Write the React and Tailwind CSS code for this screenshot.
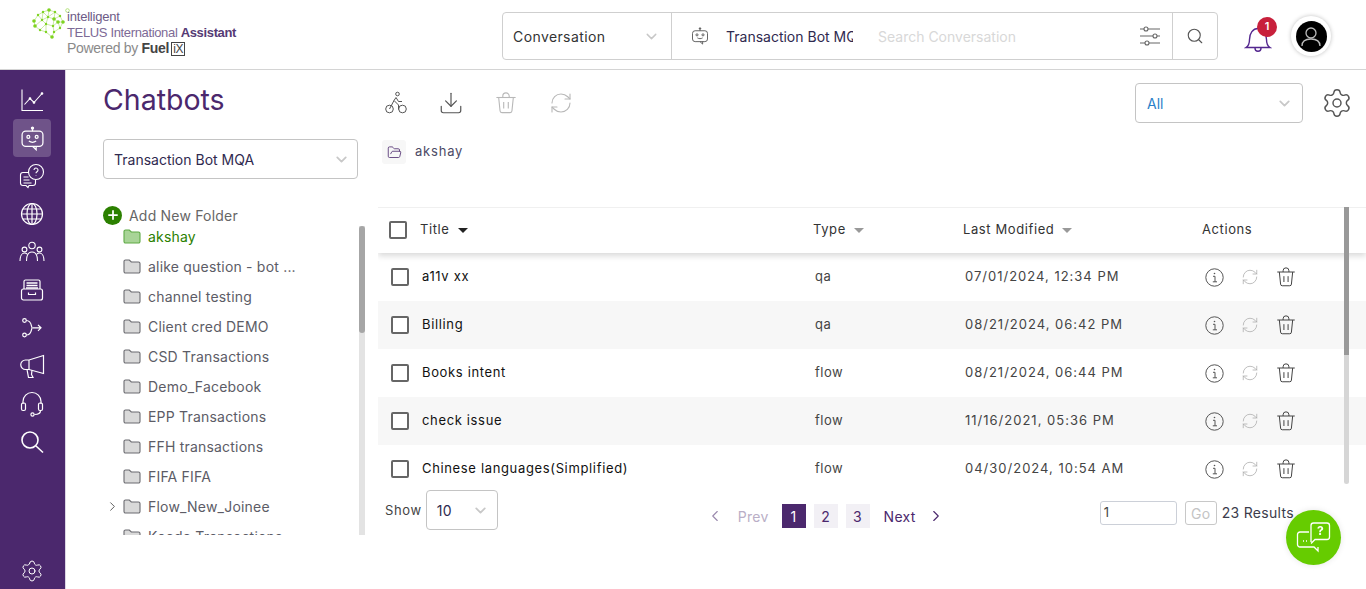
import React from 'react';
import { ChevronDown, ChevronLeft, ChevronRight, Search, Settings, Download, RefreshCw, Plus, FolderOpen } from 'lucide-react';

const FONT = "font-['Inter','Liberation_Sans',sans-serif]";

const BotIcon = ({ size = 24, className = '' }) => (
  <svg width={size} height={size} viewBox="0 0 24 24" fill="none" stroke="currentColor" strokeWidth="1.200" className={className}>
    <circle cx="12" cy="2" r="1" fill="currentColor" />
    <path d="M12 3V5" />
    <rect x="2" y="5" width="20" height="14.500" rx="3.500" />
    <circle cx="8" cy="10.500" r="1.400" />
    <circle cx="16" cy="10.500" r="1.400" />
    <path d="M8.500 14.500c2 1.400 5 1.400 7 0" />
    <path d="M12 19.500l3.500 3.300v-3.300" />
  </svg>
);

const ChartIcon = () => (
  <svg width="24" height="24" viewBox="0 0 24 24" fill="none" stroke="currentColor" strokeWidth="1.100">
    <path d="M2 1.500V22.500H23" />
    <path d="M4.500 16.500L10 10.500L14 14.500L22 5.500" />
    <circle cx="10" cy="10.500" r="0.800" fill="currentColor" />
    <circle cx="14" cy="14.500" r="0.800" fill="currentColor" />
    <circle cx="22" cy="5.500" r="0.800" fill="currentColor" />
  </svg>
);

const QuestionChatIcon = () => (
  <svg width="26" height="26" viewBox="0 0 26 26" fill="none" stroke="currentColor" strokeWidth="1.100">
    <circle cx="17" cy="9" r="7.500" />
    <path d="M17 12.500v.4M15 7a2 2 0 1 1 3 1.800c-.7.4-1 .8-1 1.500" />
    <path d="M10 9.500H4a2.500 2.500 0 0 0-2.500 2.500v8A2.500 2.500 0 0 0 4 22.500h3l2 2 1-2h4a2.500 2.500 0 0 0 2.500-2.500v-3" />
    <path d="M4.500 14h5M4.500 17h6M4.500 20h8" />
  </svg>
);

const GlobeIcon = () => (
  <svg width="24" height="24" viewBox="0 0 24 24" fill="none" stroke="currentColor" strokeWidth="1.200">
    <circle cx="12" cy="12" r="10.500" />
    <ellipse cx="12" cy="12" rx="5" ry="10.500" />
    <path d="M12 1.500V22.500M1.500 12H22.500M3 7H21M3 17H21" />
  </svg>
);

const TeamIcon = () => (
  <svg width="26" height="22" viewBox="0 0 26 22" fill="none" stroke="currentColor" strokeWidth="1.100">
    <circle cx="13" cy="4.500" r="3.200" />
    <circle cx="5.500" cy="8.500" r="2.400" />
    <circle cx="20.500" cy="8.500" r="2.400" />
    <path d="M7.500 20c0-6 2-9 5.500-9s5.500 3 5.500 9" />
    <path d="M1 20c0-4 1.500-8 4.500-8 1 0 1.800.3 2.500 1M25 20c0-4-1.500-8-4.500-8-1 0-1.800.3-2.500 1" />
  </svg>
);

const ArchiveIcon = () => (
  <svg width="24" height="24" viewBox="0 0 24 24" fill="none" stroke="currentColor" strokeWidth="1.200">
    <path d="M4 11V3.500A1.500 1.500 0 0 1 5.500 2h13A1.500 1.500 0 0 1 20 3.500V11" />
    <path d="M6.500 5h11M6.500 7.500h11M6 10h12" strokeWidth="1.500" />
    <rect x="1.500" y="11" width="21" height="11" rx="2" />
    <path d="M8.500 14.500v2h7v-2" />
  </svg>
);

const FlowIcon = () => (
  <svg width="22" height="22" viewBox="0 0 22 22" fill="none" stroke="currentColor" strokeWidth="1.200">
    <circle cx="3.500" cy="3.500" r="1.800" />
    <circle cx="3.500" cy="18" r="1.800" />
    <path d="M5.300 3.500c6 0 4.700 7.300 6 7.300 -1.300 0 0 7.200-6 7.200" />
    <path d="M11.300 10.800H20M17 7.800l3 3-3 3" />
  </svg>
);

const MegaphoneIcon = () => (
  <svg width="25" height="25" viewBox="0 0 25 25" fill="none" stroke="currentColor" strokeWidth="1.200">
    <path d="M23.500 1.500V19.500L9 15.500H5.500a4.500 4.500 0 0 1 0-9.500H9z" />
    <path d="M9 6V15.500" />
    <path d="M7 15.500L8.500 23.500H13L11.500 20.500L12 16.300" />
  </svg>
);

const HeadsetIcon = () => (
  <svg width="24" height="26" viewBox="0 0 24 26" fill="none" stroke="currentColor" strokeWidth="1.200">
    <path d="M3 13V10.500a9 9 0 0 1 18 0V13" />
    <rect x="1.500" y="12" width="4" height="7.500" rx="1.500" />
    <rect x="18.500" y="12" width="4" height="7.500" rx="1.500" />
    <path d="M20.500 19.500c0 3-2.500 4-6 4" />
    <circle cx="12.500" cy="23.500" r="1.600" />
  </svg>
);

const SearchNavIcon = () => (
  <svg width="24" height="24" viewBox="0 0 24 24" fill="none" stroke="currentColor" strokeWidth="1.600">
    <circle cx="10" cy="10" r="8" />
    <path d="M16 16L23 22.500" />
  </svg>
);

const BikeIcon = () => (
  <svg width="24" height="24" viewBox="0 0 24 24" fill="none" stroke="currentColor" strokeWidth="1">
    <circle cx="5.500" cy="18" r="3.800" />
    <circle cx="18.500" cy="18" r="3.800" />
    <circle cx="13.500" cy="3" r="1.800" />
    <path d="M5.500 18L10 9.500L12 6.500L14.500 10.500H18M10 9.500L14.500 14V18.500" />
  </svg>
);

const TrashIcon = ({ size = 24, className = '' }) => (
  <svg width={size} height={size} viewBox="0 0 24 24" fill="none" stroke="currentColor" strokeWidth="1.200" className={className}>
    <path d="M1.500 6H22.500" />
    <path d="M8.500 6V4.500a3.500 3.500 0 0 1 7 0V6" />
    <path d="M4 6L5.500 20.500A2 2 0 0 0 7.500 22.500H16.500A2 2 0 0 0 18.500 20.500L20 6" />
    <path d="M9.500 11V18M14.500 11V18" />
  </svg>
);

const InfoIcon = () => (
  <svg width="19" height="19" viewBox="0 0 19 19" fill="none" stroke="#555" strokeWidth="1">
    <circle cx="9.500" cy="9.500" r="8.700" />
    <circle cx="9.500" cy="5.500" r="0.800" fill="#555" stroke="none" />
    <path d="M8 8.300H10V13.800M7.800 13.800H12" />
  </svg>
);

const SlidersIcon = () => (
  <svg width="22" height="20" viewBox="0 0 22 20" fill="none" stroke="#666" strokeWidth="1.100">
    <path d="M1 3H5M9 3H21M1 10H14M18 10H21M1 17H6M10 17H21" />
    <circle cx="7" cy="3" r="2" />
    <circle cx="16" cy="10" r="2" />
    <circle cx="8" cy="17" r="2" />
  </svg>
);

const BellIcon = () => (
  <svg width="28" height="28" viewBox="0 0 28 28" fill="none" stroke="#54278f" strokeWidth="1.400">
    <path d="M2 22.500c2.500-1.500 3.500-4 3.500-8C5.500 8 9 3.500 14 3.500s8.500 4.500 8.500 11c0 4 1 6.500 3.500 8z" />
    <path d="M11 23c0 2 1.300 3.200 3 3.200S17 25 17 23" />
  </svg>
);

const Folder = ({ active }) => (
  <svg width="18" height="15" viewBox="0 0 18 15" className="shrink-0">
    <path
      d="M1 2.500A1.500 1.500 0 0 1 2.500 1h3.800l2 2h7.200A1.500 1.500 0 0 1 17 4.500v8a1.500 1.500 0 0 1-1.500 1.500h-13A1.500 1.500 0 0 1 1 12.500z"
      fill={active ? '#a8d497' : '#d9d9d9'}
      stroke={active ? '#5eaa45' : '#6b6b70'}
      strokeWidth="1.100"
    />
  </svg>
);

const brainNodes = [[2, 13], [6, 7], [11, 4], [17, 2], [23, 4], [28, 8], [31, 14], [28, 20], [22, 24], [20, 29], [14, 24], [8, 22], [3, 18], [10, 12], [16, 9], [22, 11], [14, 16], [21, 18], [26, 14]];

const BrainLogo = () => (
  <svg width="38" height="31" viewBox="0 0 38 31" fill="none" stroke="#a8de6a" strokeWidth="0.600" className="shrink-0">
    <path d="M2 13L6 7L11 4L17 2L23 4L28 8L31 14L28 20L22 24L20 29L14 24L8 22L3 18L2 13M6 7L10 12L11 4L16 9L17 2M16 9L23 4L22 11L28 8M22 11L26 14L31 14M26 14L28 20M26 14L21 18L22 24M21 18L14 16L14 24M14 16L8 22M14 16L10 12L3 18M10 12L16 9L22 11L21 18M16 9L14 16" />
    {brainNodes.map(([cx, cy], i) => (
      <circle key={i} cx={cx} cy={cy} r={i % 3 === 0 ? 1.800 : 1.200} fill="#7ed321" stroke="none" />
    ))}
    <circle cx="35.500" cy="2.500" r="1.800" stroke="#9ad94f" strokeWidth="0.700" />
  </svg>
);

const Select = ({ label, className, textClass = 'text-[#2f2a4f]' }) => (
  <div className={`flex items-center justify-between border border-[#c4c4c4] rounded-[4px] bg-white ${className}`}>
    <span className={`text-[14px] ${textClass}`}>{label}</span>
    <ChevronDown size={17} strokeWidth={2.500} className="text-[#c8c8c8]" />
  </div>
);

const folders = ['alike question - bot ...', 'channel testing', 'Client cred DEMO', 'CSD Transactions', 'Demo_Facebook', 'EPP Transactions', 'FFH transactions', 'FIFA FIFA', 'Flow_New_Joinee', 'Kaede Transactions'];

const rows = [
  ['a11v xx', 'qa', '07/01/2024, 12:34 PM'],
  ['Billing', 'qa', '08/21/2024, 06:42 PM'],
  ['Books intent', 'flow', '08/21/2024, 06:44 PM'],
  ['check issue', 'flow', '11/16/2021, 05:36 PM'],
  ['Chinese languages(Simplified)', 'flow', '04/30/2024, 10:54 AM'],
];

const Header = () => (
  <header className="h-[70px] shrink-0 flex items-center border-b border-[#d4d4d4] bg-white">
    <div className="w-[502px] shrink-0 pl-[32px] flex items-start h-full pt-[8px]">
      <BrainLogo />
      <div className="-ml-[3px] pt-[1px] font-['Liberation_Sans',sans-serif]">
        <div className="text-[13px] leading-[16px] tracking-[-0.2px] text-[#6d5a86]">intelligent</div>
        <div className="text-[13px] leading-[15px] tracking-[-0.35px] text-[#7d6a96]">TELUS International <b className="text-[#553a75]">Assistant</b></div>
        <div className="text-[14px] leading-[17px] tracking-[-0.3px] text-[#8a8a8a] flex items-center">
          Powered by&nbsp;<span className="text-[#444] font-bold">Fuel</span>
          <span className="ml-[2px] text-[#444] border border-[#444] leading-[12px] text-[12px] px-[1px]">iX</span>
        </div>
      </div>
    </div>
    <div className="w-[716px] h-[48px] mt-[3px] flex border border-[#cfcfcf] rounded-[4px]">
      <div className="w-[169px] shrink-0 flex items-center justify-between pl-[10px] pr-[11px] border-r border-[#cfcfcf]">
        <span className="text-[14px] tracking-[0.4px] text-[#333]">Conversation</span>
        <ChevronDown size={17} strokeWidth={2} className="text-[#c8c8c8]" />
      </div>
      <div className="flex-1 flex items-center pl-[19px]">
        <BotIcon size={18} className="text-[#555] shrink-0" />
        <span className="ml-[17px] w-[127px] overflow-hidden whitespace-nowrap text-[14px] text-[#2f2a4f]">Transaction Bot MQA</span>
        <span className="ml-[25px] text-[14px] text-[#d8d8d8]">Search Conversation</span>
      </div>
      <div className="w-[45px] pl-[12px] flex items-center">
        <SlidersIcon />
      </div>
      <div className="w-[45px] flex items-center justify-center border-l border-[#cfcfcf]">
        <Search size={18} strokeWidth={1.500} className="text-[#555]" />
      </div>
    </div>
    <div className="relative ml-[26px] mt-[8px]">
      <BellIcon />
      <span className="absolute -top-[8px] left-[13px] w-[20px] h-[20px] rounded-full bg-[#c8203c] text-white text-[11px] font-semibold flex items-center justify-center">1</span>
    </div>
    <div className="ml-[19px] mt-[3px] w-[40px] h-[40px] rounded-full bg-white shadow-[0_0_4px_rgba(0,0,0,0.25)] flex items-center justify-center">
      <div className="w-[31px] h-[31px] rounded-full bg-black flex items-center justify-center">
        <svg width="24" height="24" viewBox="0 0 24 24" fill="none" stroke="#bbb" strokeWidth="1.300">
          <circle cx="12" cy="9" r="5" />
          <path d="M3 22c0-5 4-7 9-7s9 2 9 7" />
        </svg>
      </div>
    </div>
  </header>
);

const NavItem = ({ children }) => <div className="h-[38px] flex items-center justify-center">{children}</div>;

const Sidebar = () => (
  <aside className="w-[66px] shrink-0 bg-[#4b286d] border-r border-[#dcd6e4] flex flex-col items-center text-white pt-[11px] pb-[6px] pr-[1px]">
    <NavItem><ChartIcon /></NavItem>
    <div className="w-[38px] h-[38px] rounded-[4px] bg-[#6f5389] flex items-center justify-center"><BotIcon size={25} /></div>
    <NavItem><QuestionChatIcon /></NavItem>
    <NavItem><GlobeIcon /></NavItem>
    <NavItem><TeamIcon /></NavItem>
    <NavItem><ArchiveIcon /></NavItem>
    <NavItem><FlowIcon /></NavItem>
    <NavItem><MegaphoneIcon /></NavItem>
    <NavItem><HeadsetIcon /></NavItem>
    <NavItem><SearchNavIcon /></NavItem>
    <div className="mt-auto"><Settings size={24} strokeWidth={1} /></div>
  </aside>
);

const FolderPanel = () => (
  <div className="w-[275px] shrink-0 flex flex-col">
    <h1 className="mt-[12px] text-[28.500px] leading-[36px] text-[#4b286d]">Chatbots</h1>
    <Select label="Transaction Bot MQA" className="mt-[21px] w-[255px] h-[40px] pl-[10px] pr-[7px]" />
    <div className="mt-[26px] flex items-center gap-[7px] h-[20px]">
      <span className="w-[19px] h-[19px] rounded-full bg-[#2b8000] flex items-center justify-center"><Plus size={14} strokeWidth={3} className="text-white" /></span>
      <span className="text-[14px] tracking-[0.2px] text-[#666]">Add New Folder</span>
    </div>
    <div className="relative mt-[1px] h-[309px] overflow-hidden">
      <div className="h-[20px] flex items-center pl-[20px] gap-[7px]">
        <Folder active />
        <span className="text-[14px] tracking-[0.2px] text-[#2b8000]">akshay</span>
      </div>
      <div className="pt-[5px]">
        {folders.map((name, i) => (
          <div key={name} className="relative h-[30px] flex items-center pl-[20px] gap-[7px]">
            {i === 8 && <ChevronRight size={15} strokeWidth={1.500} className="absolute left-[2px] text-[#555]" />}
            <Folder />
            <span className="text-[14px] tracking-[0.2px] text-[#5c5c66] whitespace-nowrap">{name}</span>
          </div>
        ))}
      </div>
      <div className="absolute left-[256px] top-0 bottom-0 w-[6px] bg-[#e3e3e3]">
        <div className="h-[107px] bg-[#a6a6a6] rounded-[3px]"></div>
      </div>
    </div>
  </div>
);

const Toolbar = () => (
  <div className="h-[66px] shrink-0 flex items-center pl-[6px] pr-[13px] text-[#555]">
    <BikeIcon />
    <Download size={26} strokeWidth={1.100} className="ml-[30px]" />
    <TrashIcon size={22} className="ml-[31px] text-[#b8b8b8]" />
    <RefreshCw size={24} strokeWidth={1.100} className="ml-[32px] text-[#b8b8b8]" />
    <Select label="All" className="ml-auto w-[168px] h-[40px] pl-[11px] pr-[9px]" textClass="text-[#2a7fc9]" />
    <Settings size={32} strokeWidth={1.100} className="ml-[18px]" />
  </div>
);

const Checkbox = () => <span className="block w-[18px] h-[18px] shrink-0 border-2 border-[#666] rounded-[2px] bg-white"></span>;

const SortCaret = ({ dark }) => (
  <span className={`ml-[8px] w-0 h-0 border-x-[5px] border-x-transparent border-t-[5px] ${dark ? 'border-t-[#222]' : 'border-t-[#999]'}`}></span>
);

const Table = () => (
  <div className="relative h-[278px] mt-[71px] overflow-hidden">
    <div className="relative z-10 h-[46px] pb-[1px] flex items-center border-t border-[#f0f0f0] bg-white shadow-[0_3px_6px_rgba(0,0,0,0.15)] text-[13px] tracking-[0.6px] text-[#333]">
      <div className="w-[435px] flex items-center pl-[11px]">
        <Checkbox />
        <span className="ml-[13px]">Title</span>
        <SortCaret dark />
      </div>
      <div className="w-[150px] flex items-center">Type<SortCaret /></div>
      <div className="w-[239px] flex items-center">Last Modified<SortCaret /></div>
      <div>Actions</div>
    </div>
    {rows.map((row, i) => (
      <div key={row[0]} className={`h-[48px] flex items-center ${i % 2 ? 'bg-[#f7f7f7]' : 'bg-white'}`}>
        <div className="w-[437px] flex items-center pl-[13px]">
          <Checkbox />
          <span className="ml-[13px] text-[13px] tracking-[0.65px] text-[#111]">{row[0]}</span>
        </div>
        <div className="w-[150px] text-[13px] tracking-[0.5px] text-[#444]">{row[1]}</div>
        <div className="w-[240px] text-[13px] tracking-[1px] text-[#444]">{row[2]}</div>
        <InfoIcon />
        <RefreshCw size={18} strokeWidth={1} className="ml-[17px] text-[#aaa]" />
        <TrashIcon size={20} className="ml-[17px] text-[#444]" />
      </div>
    ))}
    <div className="absolute z-20 right-[17px] top-0 bottom-[1px] w-[5px] bg-[#d6d6d6] rounded-b-[3px]">
      <div className="h-[148px] bg-[#999]"></div>
    </div>
  </div>
);

const PageBtn = ({ children, active }) => (
  <span className={`w-[24px] h-[24px] flex items-center justify-center text-[14px] ${active ? 'bg-[#4b286d] text-white' : 'bg-[#f2f0f5] text-[#4b286d]'}`}>{children}</span>
);

const Footer = () => (
  <div className="relative h-[60px] flex items-start pt-[5px] pl-[7px] text-[14px] tracking-[0.3px] text-[#444]">
    <span className="mt-[11px] text-[13px] tracking-[0.6px]">Show</span>
    <Select label="10" className="ml-[4px] w-[72px] h-[40px] pl-[10px] pr-[8px]" />
    <div className="ml-[208px] mt-[14px] flex items-center">
      <ChevronLeft size={18} strokeWidth={1.500} className="text-[#9a89ad]" />
      <span className="ml-[14px] text-[#b9aec6]">Prev</span>
      <span className="ml-[13px] flex gap-[8px]"><PageBtn active>1</PageBtn><PageBtn>2</PageBtn><PageBtn>3</PageBtn></span>
      <span className="ml-[14px] text-[#4b286d]">Next</span>
      <ChevronRight size={18} strokeWidth={1.500} className="ml-[11px] text-[#4b286d]" />
    </div>
    <div className="ml-[155px] mt-[11px] flex items-center">
      <span className="w-[77px] h-[24px] pl-[3px] border border-[#ccd0d8] rounded-[3px] flex items-center text-[13px] text-[#444]">1</span>
      <span className="ml-[8px] w-[32px] h-[24px] border border-[#c8c8c8] rounded-[3px] flex items-center justify-center text-[#c4c4c4]">Go</span>
      <span className="ml-[5px] -mt-[2px] whitespace-nowrap text-[#3c3c4c]">23 Results</span>
    </div>
  </div>
);

const HelpButton = () => (
  <button className="fixed left-[1286px] top-[510px] w-[55px] h-[55px] rounded-full bg-[#66cc00] flex items-center justify-center shadow-[0_0_6px_rgba(0,0,0,0.1)]">
    <svg width="36" height="34" viewBox="0 0 36 34" fill="none" stroke="white" strokeWidth="1.300">
      <path d="M13 11H4a2.500 2.500 0 0 0-2.500 2.500v10A2.500 2.500 0 0 0 4 26h14l4 4v-4" />
      <path d="M15 21V4.500A2.500 2.500 0 0 1 17.500 2H31a2.500 2.500 0 0 1 2.500 2.500V16a2.500 2.500 0 0 1-2.500 2.500H19l-4 4" />
      <text x="21" y="14" fill="white" stroke="none" fontSize="12" fontWeight="700">?</text>
      <path d="M7 20h1M10 20h1" strokeWidth="1.500" />
    </svg>
  </button>
);

export default function App() {
  return (
    <div className={`h-[589px] w-[1366px] overflow-hidden flex flex-col bg-white ${FONT}`}>
      <Header />
      <div className="flex-1 min-h-0 flex">
        <Sidebar />
        <main className="flex-1 min-w-0 flex pl-[37px]">
          <FolderPanel />
          <div className="flex-1 min-w-0">
            <Toolbar />
            <div className="h-[0px] relative">
              <div className="absolute left-[4px] top-[4px] flex items-center">
                <span className="w-[24px] h-[24px] rounded-[3px] bg-[#f7f7f7] flex items-center justify-center"><FolderOpen size={15} strokeWidth={1.300} className="text-[#4b286d]" /></span>
                <span className="ml-[9px] text-[13px] tracking-[0.8px] text-[#4d4a66]">akshay</span>
              </div>
            </div>
            <Table />
            <Footer />
          </div>
        </main>
      </div>
      <HelpButton />
    </div>
  );
}
